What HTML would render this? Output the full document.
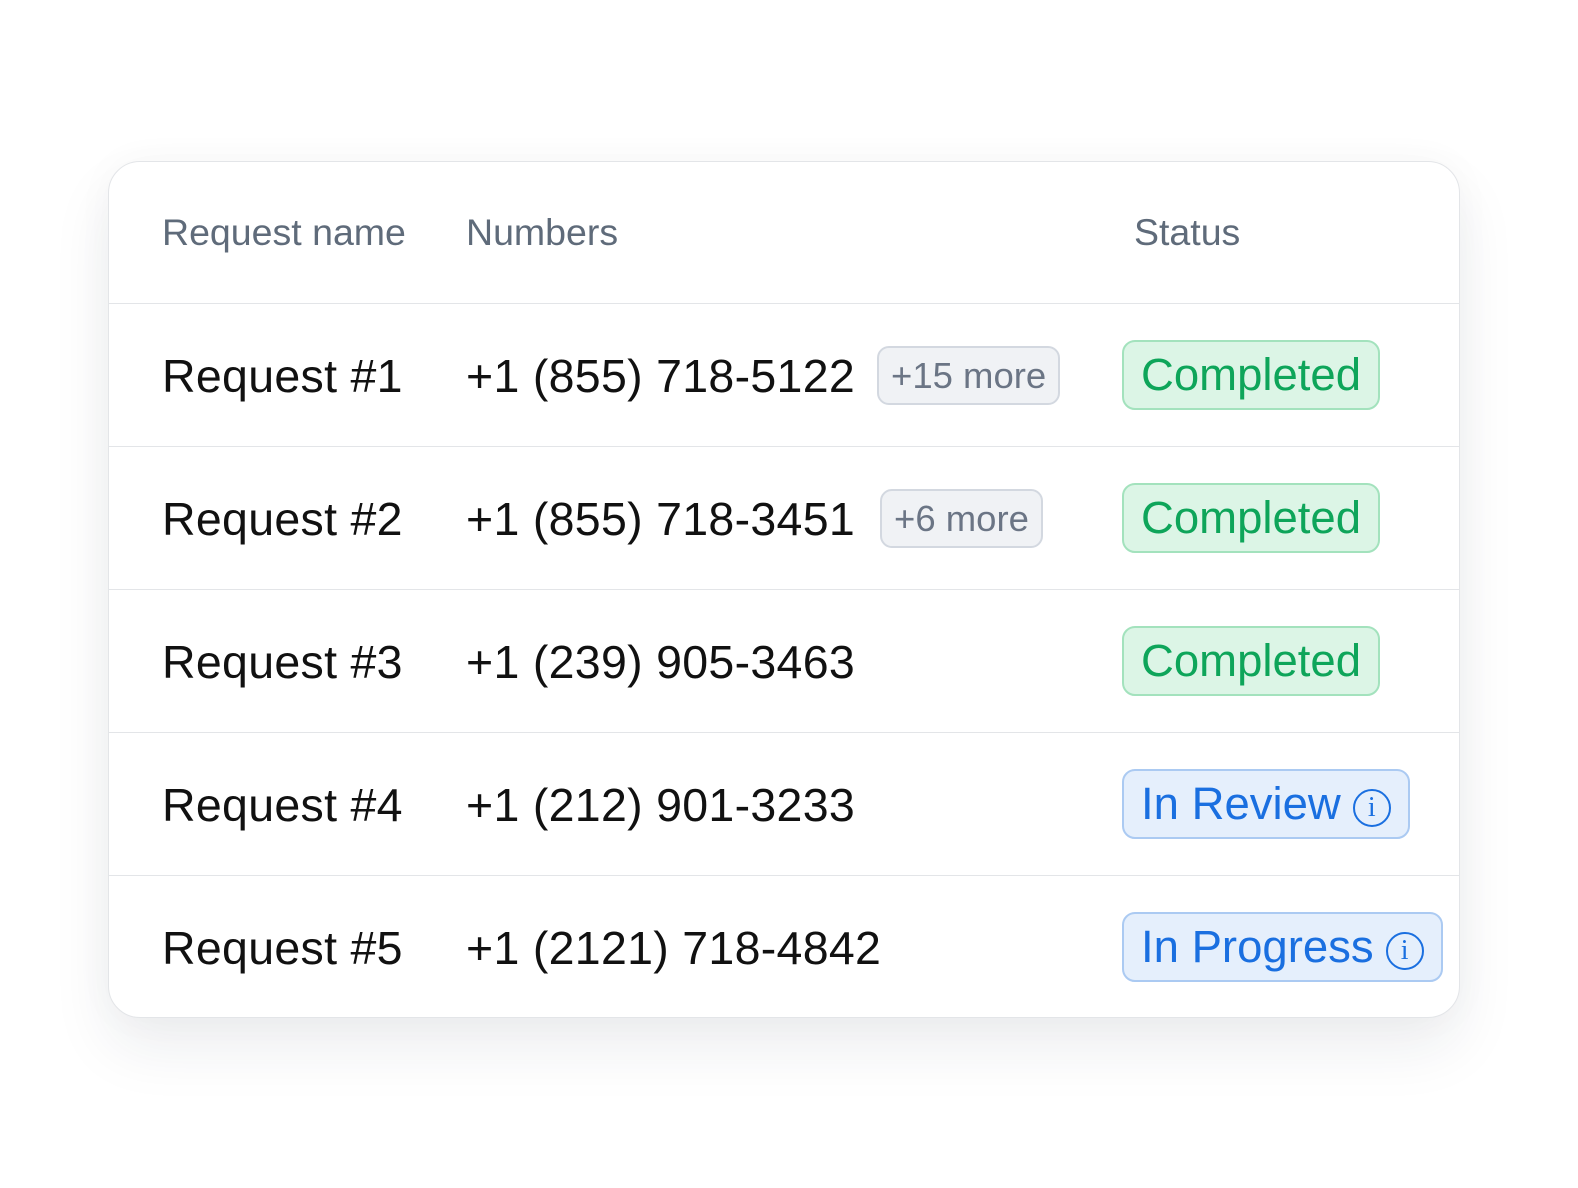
<!DOCTYPE html>
<html><head><style>
body{margin:0;width:1578px;height:1188px;background:#fff;font-family:"Liberation Sans",sans-serif;position:relative;overflow:hidden}
.card{position:absolute;left:108px;top:161px;width:1350px;height:855px;border:1px solid #e3e5e8;border-radius:32px;background:#fff;box-shadow:0 30px 60px rgba(30,40,60,0.08),0 0 40px rgba(30,40,60,0.03);overflow:hidden}
.hd{position:absolute;top:0;left:0;right:0;height:141px;border-bottom:1px solid #e3e5e8}
.h{position:absolute;top:49px;font-size:37.5px;color:#5f6b7a}
.row{position:absolute;left:0;right:0;height:142px;border-bottom:1px solid #e3e5e8}
.t{position:absolute;top:45px;font-size:46.5px;color:#111;white-space:nowrap;letter-spacing:0.3px}
.more{position:absolute;top:42px;height:55px;border:2px solid #d3d8e0;background:#f0f2f5;border-radius:12px;color:#6b7585;font-size:36.5px;line-height:55px;padding:0 12px}
.b{position:absolute;left:1013px;top:36px;height:66px;border:2px solid;border-radius:13px;font-size:45.5px;line-height:66px;padding:0 17px;white-space:nowrap}
.g{background:#dcf5e6;border-color:#a3e2bd;color:#0ea55a}
.bl{background:#e5effc;border-color:#abcaf2;color:#1a6fe0}
.i{display:inline-block;width:38px;height:38px;border:2.5px solid #1a6fe0;border-radius:50%;box-sizing:border-box;font-family:"Liberation Serif",serif;font-size:28px;line-height:34px;text-align:center;vertical-align:3px;margin-left:12px}
</style></head><body>
<div class="card">
<div class="hd"><div class="h" style="left:53px">Request name</div><div class="h" style="left:357px">Numbers</div><div class="h" style="left:1025px">Status</div></div>
<div style="position:absolute;top:142px;left:0;right:0">
<div class="row" style="top:0"><div class="t" style="left:53px">Request #1</div><div class="t" style="left:357px">+1 (855) 718-5122</div><div class="more" style="left:768px">+15 more</div><div class="b g">Completed</div></div>
<div class="row" style="top:143px"><div class="t" style="left:53px">Request #2</div><div class="t" style="left:357px">+1 (855) 718-3451</div><div class="more" style="left:771px">+6 more</div><div class="b g">Completed</div></div>
<div class="row" style="top:286px"><div class="t" style="left:53px">Request #3</div><div class="t" style="left:357px">+1 (239) 905-3463</div><div class="b g">Completed</div></div>
<div class="row" style="top:429px"><div class="t" style="left:53px">Request #4</div><div class="t" style="left:357px">+1 (212) 901-3233</div><div class="b bl">In Review<span class="i">i</span></div></div>
<div class="row" style="top:572px;border-bottom:none"><div class="t" style="left:53px">Request #5</div><div class="t" style="left:357px">+1 (2121) 718-4842</div><div class="b bl">In Progress<span class="i">i</span></div></div>
</div>
</div>
</body></html>
